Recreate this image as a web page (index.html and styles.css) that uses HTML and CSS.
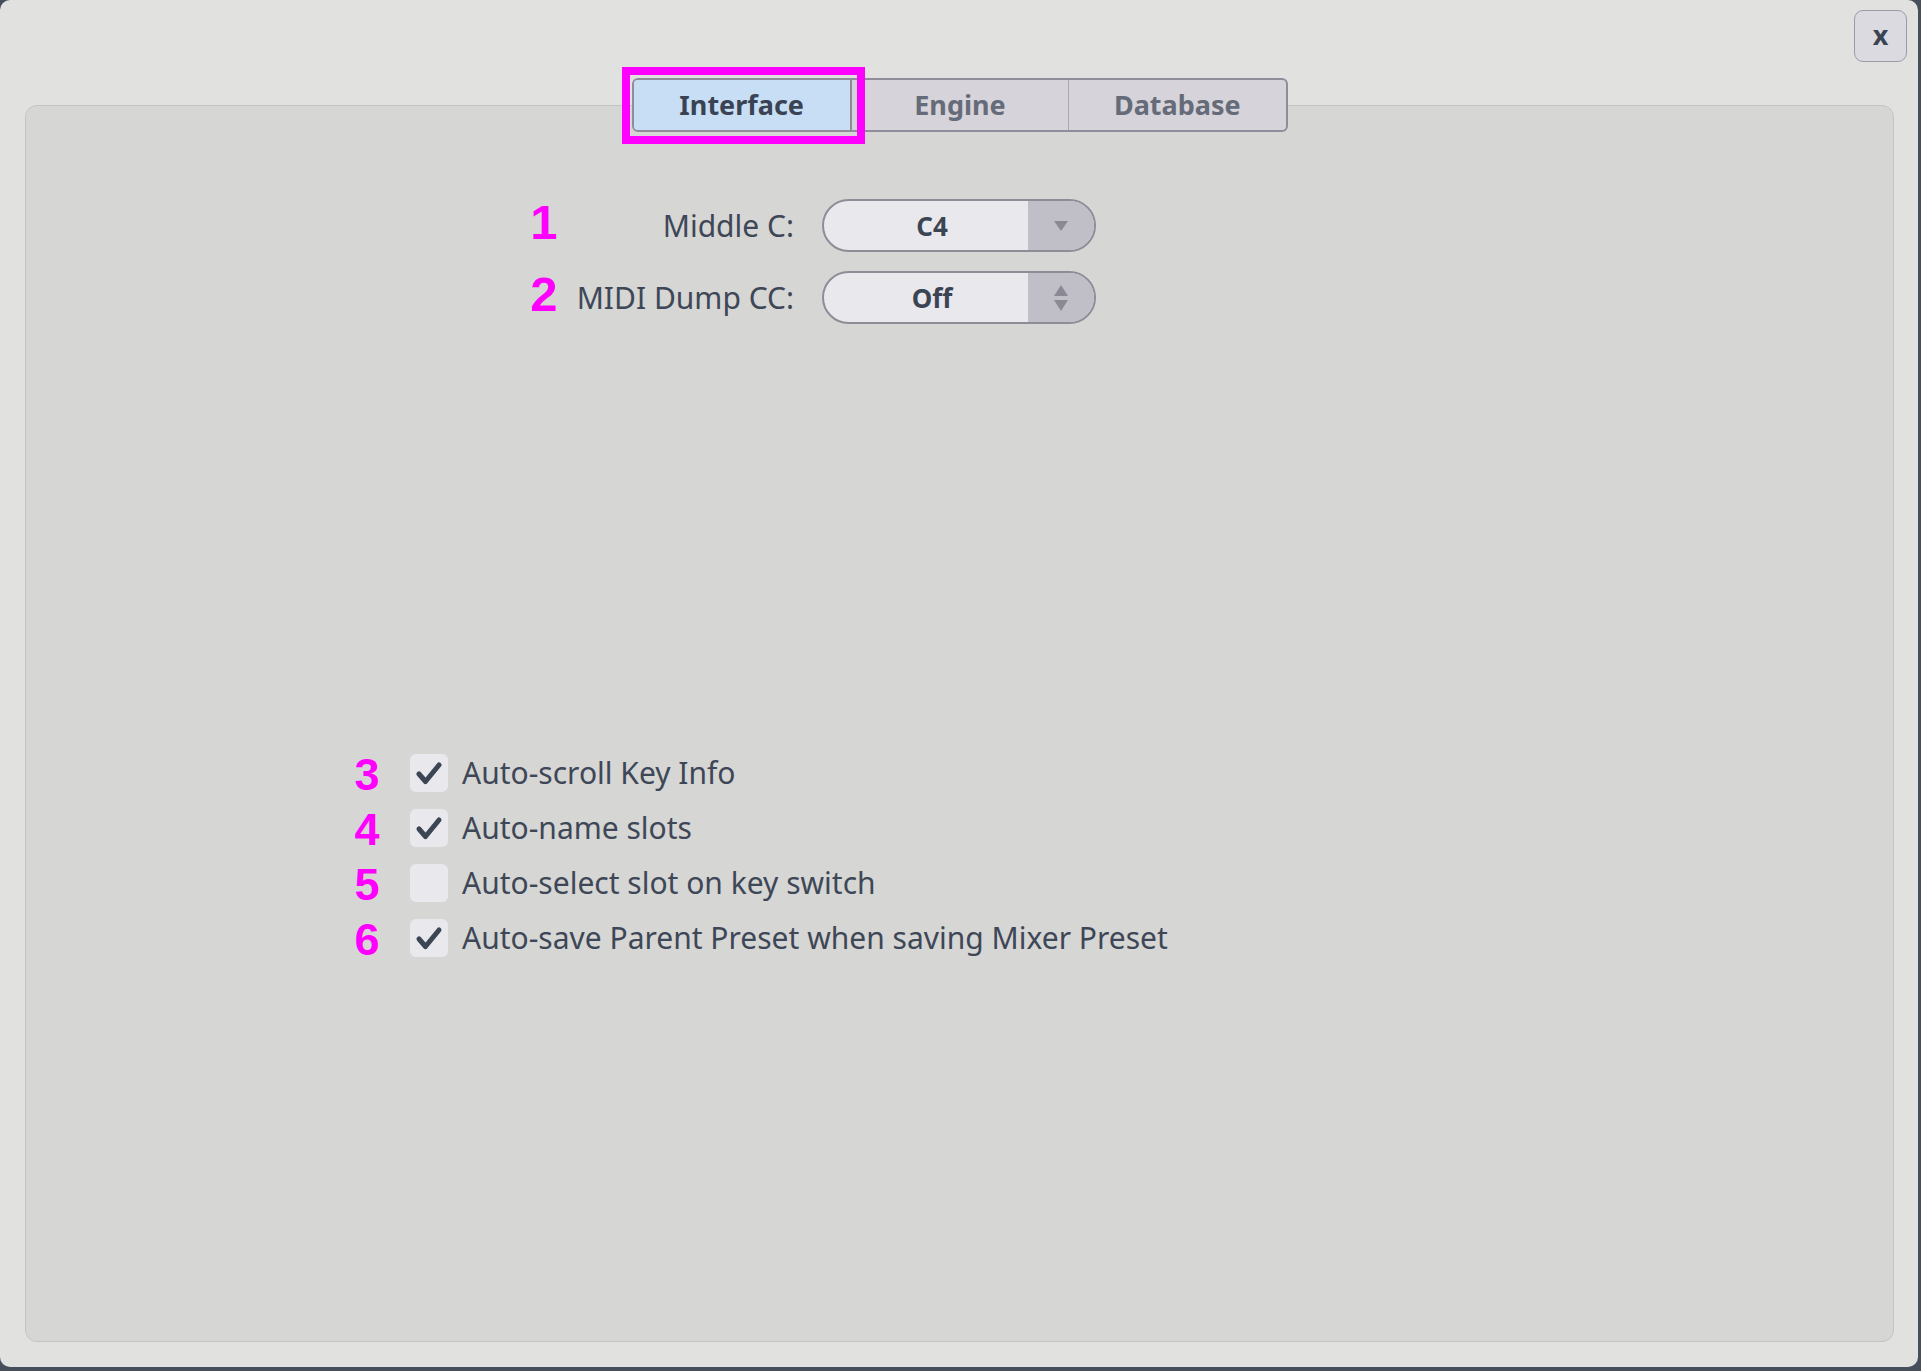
FILE: index.html
```html
<!DOCTYPE html>
<html lang="en">
<head>
<meta charset="utf-8">
<title>Preferences</title>
<link rel="stylesheet" href="styles.css">
</head>
<body>
<div class="window">
  <div class="titlebar">
    <button class="close">x</button>
  </div>
  <div class="panel">
    <div class="tabs-wrap">
      <div class="tabs">
        <div class="tab active">Interface</div>
        <div class="tab">Engine</div>
        <div class="tab">Database</div>
      </div>
      <div class="highlight"></div>
    </div>

    <div class="fields">
      <div class="field">
        <span class="num big">1</span>
        <span class="label">Middle C:</span>
        <div class="select">
          <span class="value">C4</span>
          <span class="arrow">
            <svg width="16" height="12" viewBox="0 0 16 12"><path d="M1 1 H15 L8 11 Z" fill="#8b8994"/></svg>
          </span>
        </div>
      </div>
      <div class="field">
        <span class="num big">2</span>
        <span class="label">MIDI Dump CC:</span>
        <div class="select">
          <span class="value">Off</span>
          <span class="arrow">
            <svg width="16" height="28" viewBox="0 0 16 28"><path d="M8 1 L15 12 H1 Z" fill="#8b8994"/><path d="M1 16 H15 L8 27 Z" fill="#8b8994"/></svg>
          </span>
        </div>
      </div>
    </div>

    <div class="checks">
      <div class="check">
        <span class="num small">3</span>
        <span class="box"><svg width="38" height="38" viewBox="0 0 38 38"><path d="M9 20 L15.5 27.5 L29 11" fill="none" stroke="#3b4553" stroke-width="5" stroke-linecap="round" stroke-linejoin="round"/></svg></span>
        <span class="check-label">Auto-scroll Key Info</span>
      </div>
      <div class="check">
        <span class="num small">4</span>
        <span class="box"><svg width="38" height="38" viewBox="0 0 38 38"><path d="M9 20 L15.5 27.5 L29 11" fill="none" stroke="#3b4553" stroke-width="5" stroke-linecap="round" stroke-linejoin="round"/></svg></span>
        <span class="check-label">Auto-name slots</span>
      </div>
      <div class="check">
        <span class="num small">5</span>
        <span class="box"></span>
        <span class="check-label">Auto-select slot on key switch</span>
      </div>
      <div class="check">
        <span class="num small">6</span>
        <span class="box"><svg width="38" height="38" viewBox="0 0 38 38"><path d="M9 20 L15.5 27.5 L29 11" fill="none" stroke="#3b4553" stroke-width="5" stroke-linecap="round" stroke-linejoin="round"/></svg></span>
        <span class="check-label">Auto-save Parent Preset when saving Mixer Preset</span>
      </div>
    </div>
  </div>
</div>
</body>
</html>
```

FILE: styles.css
```css
html, body {
  margin: 0;
  padding: 0;
}

body {
  width: 1921px;
  height: 1371px;
  overflow: hidden;
  background: #464d5b;
  font-family: "Noto Sans", "Open Sans", sans-serif;
}

.window {
  width: 1918px;
  height: 1367px;
  background: #e1e1df;
  border-radius: 10px;
  display: flex;
  flex-direction: column;
}

.titlebar {
  display: flex;
  justify-content: flex-end;
  padding: 10px 11px 0 0;
  height: 52px;
}

.close {
  width: 53px;
  height: 52px;
  box-sizing: border-box;
  border: 1px solid #9d9ba6;
  border-radius: 9px;
  background: #dcdae1;
  color: #3b4452;
  font-family: "Noto Sans", sans-serif;
  font-weight: bold;
  font-size: 27px;
  line-height: 1;
  padding: 0 0 4px 0;
  display: flex;
  align-items: center;
  justify-content: center;
}

.panel {
  margin: 43px 24px 0 25px;
  height: 1237px;
  box-sizing: border-box;
  background: #d6d6d4;
  border: 1px solid #c4c4c2;
  border-radius: 12px;
  display: flex;
  flex-direction: column;
}

.tabs-wrap {
  align-self: center;
  position: relative;
  margin-top: -28px;
}

.tabs {
  display: flex;
  width: 656px;
  height: 54px;
  box-sizing: border-box;
  border: 2px solid #8f8d99;
  border-radius: 6px;
  overflow: hidden;
  background: #d6d3da;
}

.tab {
  flex: 1;
  display: flex;
  align-items: center;
  justify-content: center;
  font-weight: bold;
  font-size: 27px;
  color: #656b78;
  padding-bottom: 2px;
}

.tab + .tab {
  border-left: 1px solid #aaa8b1;
}

.tab.active {
  background: #c8def5;
  color: #3a4353;
}

.tab.active + .tab {
  border-left: 2px solid #8d8b97;
}

.highlight {
  position: absolute;
  left: -10px;
  top: -11px;
  width: 243px;
  height: 77px;
  box-sizing: border-box;
  border: 8px solid #ff00ff;
}

.fields {
  margin-top: 67px;
  margin-left: 493px;
  display: flex;
  flex-direction: column;
  gap: 19px;
}

.field {
  display: flex;
  align-items: center;
  height: 53px;
}

.num {
  font-family: "Liberation Sans", Arial, sans-serif;
  font-weight: bold;
  color: #ff00ff;
  text-align: center;
  line-height: 1;
}

.num.big {
  width: 50px;
  font-size: 49px;
  padding-bottom: 6px;
}

.num.small {
  width: 40px;
  margin-right: 23px;
  font-size: 45px;
  padding-top: 4px;
}

.label {
  width: 225px;
  text-align: right;
  font-size: 30px;
  color: #3e4757;
  margin-right: 28px;
}

.select {
  width: 274px;
  height: 53px;
  box-sizing: border-box;
  border: 2px solid #8e8c97;
  border-radius: 27px;
  overflow: hidden;
  display: flex;
  background: #e9e8ec;
}

.value {
  flex: 1;
  display: flex;
  align-items: center;
  justify-content: center;
  padding-left: 12px;
  font-weight: bold;
  font-size: 26px;
  color: #3b4453;
}

.arrow {
  width: 66px;
  background: #c0bec6;
  display: flex;
  align-items: center;
  justify-content: center;
}

.checks {
  margin-top: 421px;
  margin-left: 321px;
  display: flex;
  flex-direction: column;
}

.check {
  display: flex;
  align-items: center;
  height: 55px;
}

.box {
  width: 38px;
  height: 38px;
  border-radius: 6px;
  background: #e9e8ec;
  margin-right: 14px;
  display: block;
}

.box svg {
  display: block;
}

.check-label {
  font-size: 30px;
  color: #3e4757;
}
```
